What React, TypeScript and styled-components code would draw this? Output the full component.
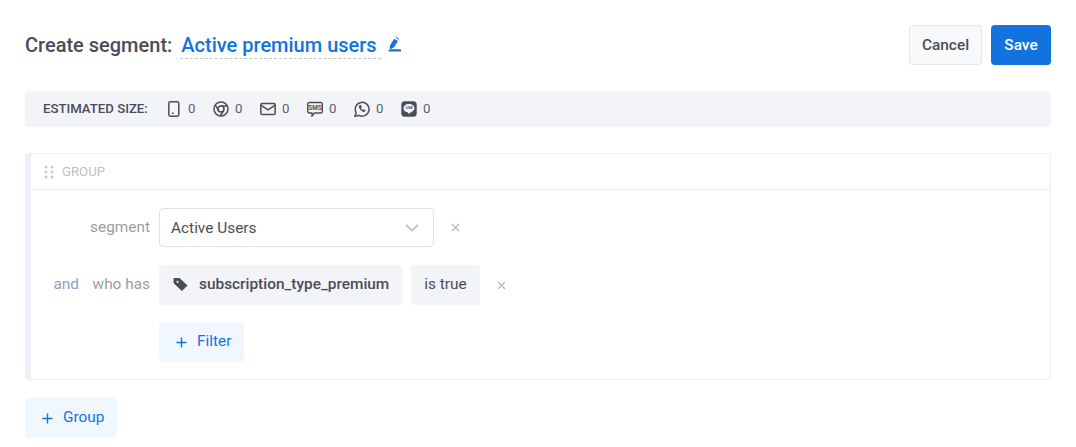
import React from "react";
import styled, { createGlobalStyle } from "styled-components";

const Global = createGlobalStyle`
  html, body { margin: 0; padding: 0; background: #fff; }
  body { font-family: Roboto, "Liberation Sans", sans-serif; color: #4a4d55; }
  * { box-sizing: border-box; }
`;

const Page = styled.div`
  width: 1076px;
  height: 447px;
  padding: 25px 25px 0;
  overflow: hidden;
`;
const Header = styled.header`
  display: flex;
  justify-content: space-between;
  align-items: center;
  height: 40px;
`;
const TitleGroup = styled.div`
  display: flex;
  align-items: center;
`;
const Title = styled.h1`
  margin: 0;
  font-size: 20px;
  font-weight: 500;
  color: #4a4d55;
  line-height: 40px;
  white-space: nowrap;
`;
const NameField = styled.div`
  margin-left: 8px;
  width: 201px;
  height: 28px;
  font-size: 20px;
  font-weight: 500;
  line-height: 28px;
  color: #1273de;
  border-bottom: 1px dashed #c4c6ca;
  padding-left: 1px;
  white-space: nowrap;
`;
const EditIcon = styled.svg`
  margin-left: 7px;
  margin-top: -1px;
`;
const Actions = styled.div`
  display: flex;
  gap: 9px;
`;
const Button = styled.button<{ $primary?: boolean }>`
  height: 40px;
  padding: 0;
  width: ${(p) => (p.$primary ? "60px" : "73px")};
  border-radius: 4px;
  font-family: inherit;
  font-size: 15.4px;
  font-weight: 500;
  color: ${(p) => (p.$primary ? "#fff" : "#4a4d55")};
  background: ${(p) => (p.$primary ? "#1273de" : "#f8f9fb")};
  border: ${(p) => (p.$primary ? "none" : "1px solid #e3e5e9")};
`;
const StatsBar = styled.div`
  margin-top: 26px;
  height: 36px;
  background: #f3f4f8;
  border-radius: 4px;
  display: flex;
  align-items: center;
  padding-left: 18px;
`;
const StatsLabel = styled.span`
  font-size: 13.2px;
  font-weight: 500;
  color: #4a4d55;
  width: 123px;
  flex: none;
  margin-bottom: 1px;
`;
const Stat = styled.span`
  display: flex;
  align-items: center;
  width: 47px;
  font-size: 13.2px;
  color: #5b5e66;
  gap: 6px;
`;
const StatValue = styled.span`
  margin-bottom: 1px;
`;
const Card = styled.section`
  margin-top: 26px;
  height: 227px;
  border: 1px solid #eceef2;
  border-left: 6px solid #edf0f6;
  border-radius: 4px;
`;
const CardHeader = styled.div`
  height: 36px;
  display: flex;
  align-items: center;
  padding-left: 13px;
  gap: 8px;
  border-bottom: 1px solid #eceef2;
  font-size: 13.2px;
  font-weight: 400;
  color: #bcbec3;
`;
const Rows = styled.div`
  padding-top: 18px;
  display: flex;
  flex-direction: column;
  gap: 18px;
`;
const Row = styled.div`
  display: flex;
  align-items: center;
`;
const FilterRow = styled(Row)`
  margin-top: -1px;
  padding-left: 128px;
`;
const Conj = styled.span`
  width: 48px;
  flex: none;
  text-align: right;
  font-size: 15.4px;
  color: #86a3c4;
  padding-bottom: 2px;
`;
const Label = styled.span`
  width: 71px;
  flex: none;
  text-align: right;
  font-size: 15.4px;
  color: #9a9ca1;
  margin-right: 9px;
  white-space: nowrap;
  padding-bottom: 2px;
`;
const SelectBox = styled.div`
  width: 275px;
  height: 39px;
  border: 1px solid #dfe1e5;
  border-radius: 4px;
  display: flex;
  align-items: center;
  justify-content: space-between;
  padding: 0 14px 0 11px;
  font-size: 15.4px;
  color: #4a4d55;
`;
const Chip = styled.div<{ $strong?: boolean }>`
  height: 40px;
  display: flex;
  align-items: center;
  background: #f3f4f8;
  border-radius: 4px;
  font-size: 15.4px;
  font-weight: ${(p) => (p.$strong ? 500 : 400)};
  color: #4a4d55;
  padding: ${(p) => (p.$strong ? "0 13px 2px 14px" : "0 13px 2px")};
  gap: 11px;
  margin-right: ${(p) => (p.$strong ? "9px" : "0")};
`;
const Remove = styled.svg<{ $gap: number }>`
  margin-left: ${(p) => p.$gap}px;
`;
const AddButton = styled.button<{ $w: number }>`
  height: 40px;
  width: ${(p) => p.$w}px;
  border: none;
  border-radius: 4px;
  background: #f0f7ff;
  color: #1273de;
  font-family: inherit;
  font-size: 15.4px;
  display: flex;
  align-items: center;
  gap: 10px;
  padding: 0 0 2px 17px;
`;
const AddGroup = styled(AddButton)`
  margin-top: 18px;
`;
const PlusIcon = styled.svg`
  margin-top: 2px;
  flex: none;
`;
const IconText = styled.text`
  font-family: Roboto, "Liberation Sans", sans-serif;
  font-weight: 700;
  text-anchor: middle;
`;

const Ico = ({ children }: { children: React.ReactNode }) => (
  <svg width="16" height="16" viewBox="0 0 16 16" fill="none" stroke="#4a4d55" strokeWidth="1.5">
    {children}
  </svg>
);
const Plus = () => (
  <PlusIcon width="11" height="11" viewBox="0 0 11 11" stroke="#1273de" strokeWidth="1.4">
    <path d="M5.500 0.500v10M0.500 5.500h10" />
  </PlusIcon>
);
const X = ({ gap }: { gap: number }) => (
  <Remove $gap={gap} width="9" height="9" viewBox="0 0 9 9" stroke="#b4b6ba" strokeWidth="1.2">
    <path d="M1 1l7 7M8 1l-7 7" />
  </Remove>
);

const icons = [
  <Ico key="m"><rect x="2.800" y="0.800" width="10" height="14.400" rx="1.600" /><path d="M6 12.300h1.600" /></Ico>,
  <Ico key="c"><circle cx="8" cy="8" r="7" /><circle cx="8" cy="8" r="3" /><path d="M8 5h6.400M5.400 9.500L2.300 4M10.600 9.500L7.300 15" /></Ico>,
  <Ico key="e"><rect x="0.800" y="2.500" width="14.400" height="11" rx="1.600" /><path d="M1.200 4.300L8 8.800l6.800-4.500" /></Ico>,
  <svg key="s" width="16" height="16" viewBox="0 0 16 16" fill="none" stroke="#4a4d55" strokeWidth="1.4">
    <path d="M2.200 1.500h11.600A1.500 1.500 0 0 1 15.300 3v7.500a1.500 1.500 0 0 1-1.500 1.500H7.600L5 15v-3H2.200a1.500 1.500 0 0 1-1.500-1.500V3a1.500 1.500 0 0 1 1.500-1.500z" />
    <IconText x="8" y="9.300" fontSize="6.400" fill="#4a4d55" stroke="none">SMS</IconText>
  </svg>,
  <Ico key="w">
    <path d="M1 15.400l1.100-3.900A6.900 6.900 0 1 1 4.900 14.300z" />
    <path d="M5.600 4.300c-1 .9-.9 2.300.3 4 1.300 1.800 2.900 2.800 4.300 2.500.9-.1 1.300-.8 1.300-1.600L9.800 8.300l-.9.800C8 8.600 7.400 7.900 7 7l.8-.9L7 4.100z" fill="#4a4d55" stroke="none" />
  </Ico>,
  <svg key="l" width="16" height="16" viewBox="0 0 16 16">
    <rect x="0.300" y="0.300" width="15.400" height="15.400" rx="3.500" fill="#4a4d55" />
    <path d="M8 3c-3.100 0-5.500 1.900-5.500 4.200 0 2.100 1.800 3.800 4.300 4.100.5.100.4.500.3 1.200 0 .3.200.4.500.2 1.900-1.100 5.900-3.100 5.900-5.500C13.500 4.900 11.100 3 8 3z" fill="#f3f4f8" />
    <IconText x="8" y="8.400" fontSize="3.400" fill="#4a4d55">LINE</IconText>
  </svg>,
];

export default function App() {
  return (
    <Page>
      <Global />
      <Header>
        <TitleGroup>
          <Title>Create segment:</Title>
          <NameField>Active premium users</NameField>
          <EditIcon width="13" height="15" viewBox="0 0 13 15">
            <path d="M0.500 14.500c0-1.300.8-2.200 1.800-2.200h9.900c.5 0 .8.500.8 1v1.200z" fill="#1273de" />
            <path d="M1.500 11.300l.9-3.600L6.200 1.800l3.700 2.300L6.300 10l-3.200 1.900z" fill="#1273de" />
            <path d="M7.600 0.500c.8-.4 1.500-.2 2.100.2.900.6 1.300 1.400 1.200 2.200z" fill="#1273de" />
          </EditIcon>
        </TitleGroup>
        <Actions>
          <Button>Cancel</Button>
          <Button $primary>Save</Button>
        </Actions>
      </Header>

      <StatsBar>
        <StatsLabel>ESTIMATED SIZE:</StatsLabel>
        {icons.map((ic, i) => (
          <Stat key={i}>
            {ic}
            <StatValue>0</StatValue>
          </Stat>
        ))}
      </StatsBar>

      <Card>
        <CardHeader>
          <svg width="10" height="14" viewBox="0 0 10 14" fill="#c9cbcf">
            <circle cx="2" cy="2" r="1.500" /><circle cx="8" cy="2" r="1.500" />
            <circle cx="2" cy="7" r="1.500" /><circle cx="8" cy="7" r="1.500" />
            <circle cx="2" cy="12" r="1.500" /><circle cx="8" cy="12" r="1.500" />
          </svg>
          GROUP
        </CardHeader>
        <Rows>
          <Row>
            <Conj />
            <Label>segment</Label>
            <SelectBox>
              Active Users
              <svg width="14" height="8" viewBox="0 0 14 8" fill="none" stroke="#c4c6ca" strokeWidth="2">
                <path d="M1 1l6 5.500L13 1" />
              </svg>
            </SelectBox>
            <X gap={17} />
          </Row>
          <Row>
            <Conj>and</Conj>
            <Label>who has</Label>
            <Chip $strong>
              <svg width="15" height="15" viewBox="0 0 15 15" fill="#4a4d55" stroke="#4a4d55" strokeWidth="1" strokeLinejoin="round">
                <path d="M1 1.500h5.500l7.500 7-5 5-8-7.500z" />
                <circle cx="4.500" cy="4.800" r="1.100" fill="#f3f4f8" stroke="none" />
              </svg>
              subscription_type_premium
            </Chip>
            <Chip>is true</Chip>
            <X gap={17} />
          </Row>
          <FilterRow>
            <AddButton $w={85}>
              <Plus />
              Filter
            </AddButton>
          </FilterRow>
        </Rows>
      </Card>

      <AddGroup $w={92}>
        <Plus />
        Group
      </AddGroup>
    </Page>
  );
}
